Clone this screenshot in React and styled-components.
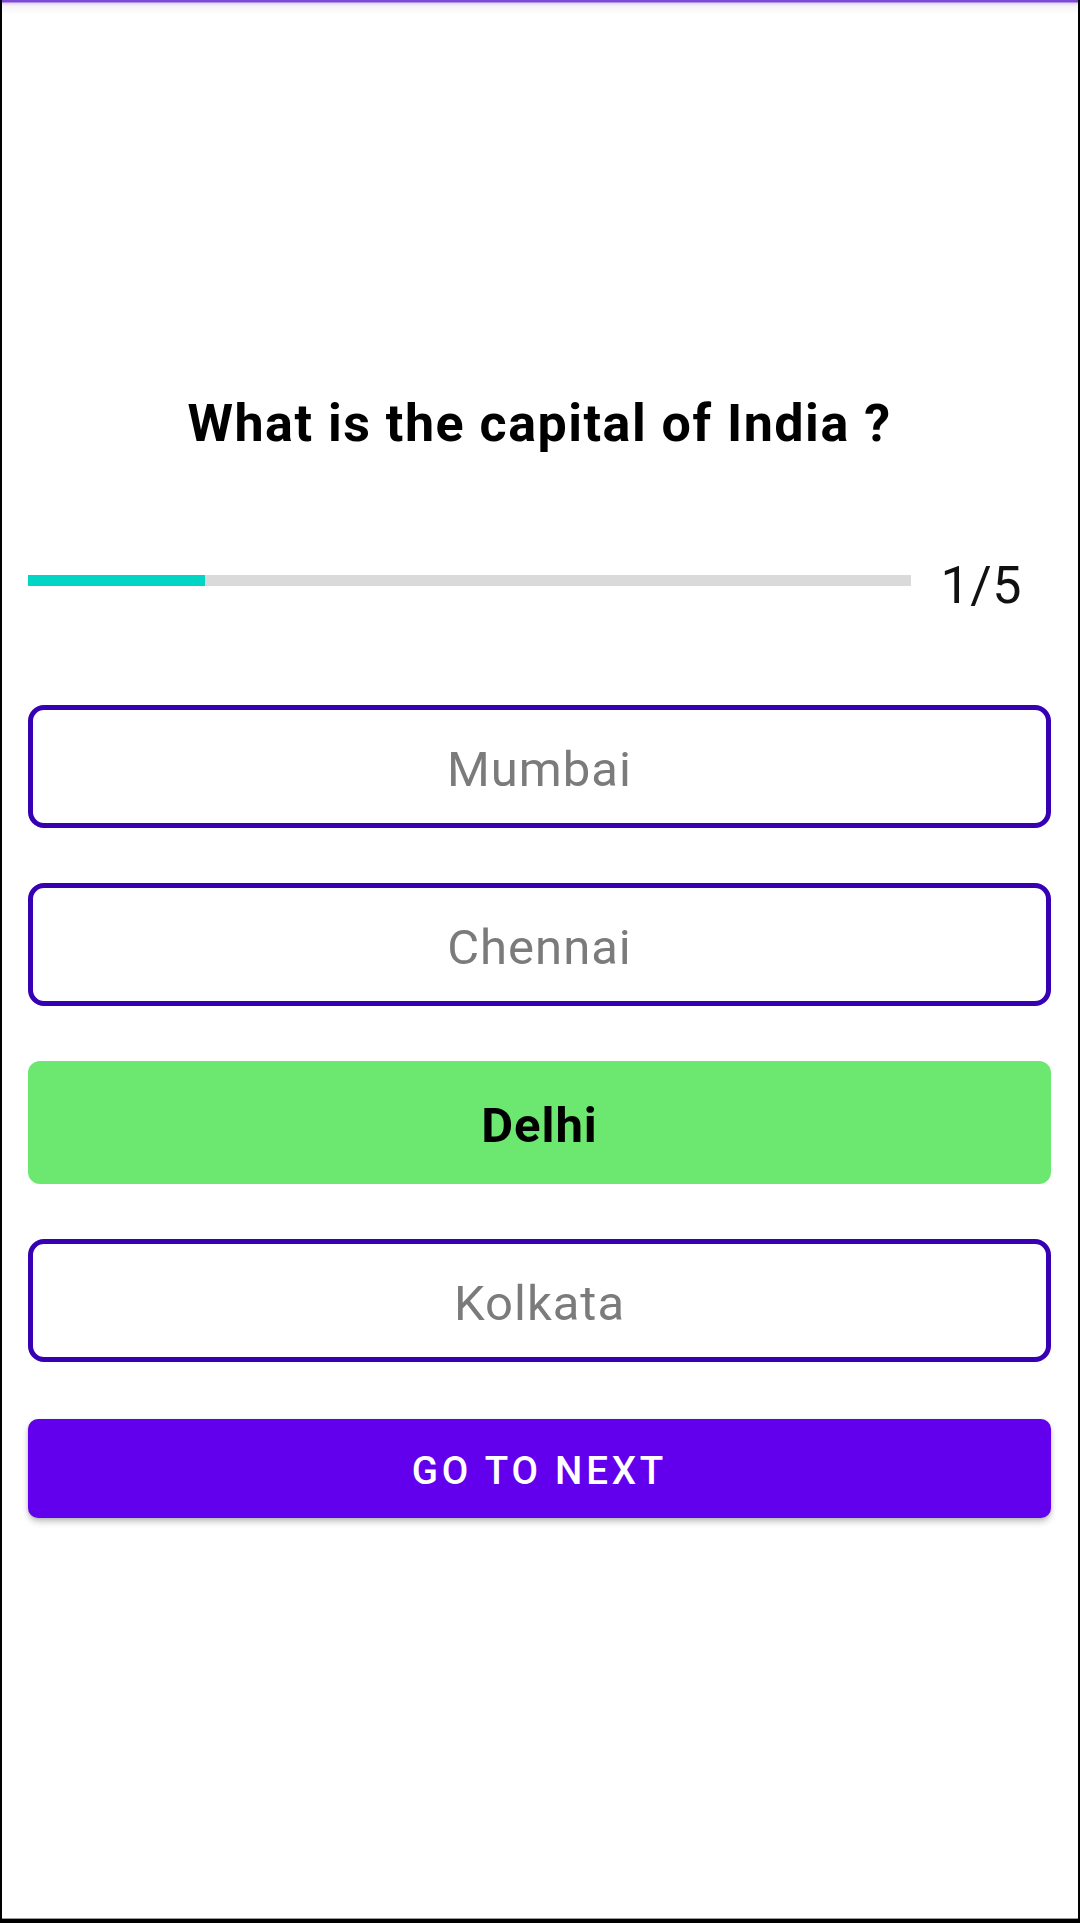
import React from "react";
import styled, { createGlobalStyle } from "styled-components";

const Global = createGlobalStyle`
  html, body { margin: 0; padding: 0; background: #ffffff; }
  * { box-sizing: border-box; }
  body { font-family: Roboto, "Noto Sans", "Liberation Sans", sans-serif; }
`;

const Screen = styled.div`
  width: 1080px;
  height: 1923px;
  background: #ffffff;
  border-left: 2px solid #000;
  border-right: 2px solid #000;
  border-bottom: 4px solid #000;
  display: flex;
  flex-direction: column;
  position: relative;
  overflow: hidden;
`;

const BottomLine = styled.div`
  margin-top: auto;
  height: 1px;
  background: #9a9a9a;
`;

const TopEdge = styled.div`
  height: 14px;
  flex-shrink: 0;
  background: linear-gradient(
    to bottom,
    #7c4bd6 0px,
    #7c4bd6 2px,
    rgba(170, 130, 220, 0.35) 3px,
    rgba(200, 190, 210, 0.18) 6px,
    rgba(255, 255, 255, 0) 14px
  );
`;

const Content = styled.main`
  display: flex;
  flex-direction: column;
  padding: 0 27px 0 26px;
`;

const Question = styled.h1`
  margin: 379px 0 0;
  font-family: Roboto, "Liberation Sans", sans-serif;
  font-weight: 700;
  font-size: 52px;
  letter-spacing: 1.5px;
  line-height: 61px;
  color: #000;
  text-align: center;
`;

const ProgressRow = styled.div`
  margin-top: 101px;
  display: flex;
  align-items: flex-start;
  height: 61px;
`;

const Track = styled.div`
  flex: 1;
  height: 11px;
  margin-top: 20px;
  background: #dadada;
  display: flex;
`;

const Fill = styled.div`
  height: 100%;
  background: #03d5c4;
`;

const Count = styled.span`
  margin: 0 29px 0 30px;
  font-family: Roboto, "Liberation Sans", sans-serif;
  font-weight: 400;
  font-size: 52px;
  letter-spacing: 0.5px;
  line-height: 61px;
  color: #111;
`;

const Options = styled.div`
  margin-top: 89px;
  display: flex;
  flex-direction: column;
  gap: 55px;
`;

const Option = styled.div`
  height: 123px;
  display: flex;
  align-items: center;
  justify-content: center;
  padding-top: 5px;
  border-radius: ${(p) => (p.$correct ? "12px" : "16px")};
  border: ${(p) => (p.$correct ? "none" : "5px solid #3700b3")};
  background: ${(p) => (p.$correct ? "#6ce770" : "#ffffff")};
  color: ${(p) => (p.$correct ? "#000000" : "#7b7b7b")};
  font-family: Roboto, "Liberation Sans", sans-serif;
  font-weight: ${(p) => (p.$correct ? 700 : 400)};
  font-size: 49px;
  letter-spacing: 1px;
  line-height: 1;
`;

const NextButton = styled.button`
  margin-top: 57px;
  height: 99px;
  width: 100%;
  border: none;
  border-radius: 10px;
  background: #6200ee;
  color: #ffffff;
  font-family: Roboto, "Liberation Sans", sans-serif;
  font-weight: 500;
  font-size: 38.5px;
  letter-spacing: 3.8px;
  text-transform: uppercase;
  box-shadow: 0 4px 6px rgba(0, 0, 0, 0.22), 0 1px 3px rgba(0, 0, 0, 0.12);
  display: flex;
  align-items: center;
  justify-content: center;
  padding: 4px 0 0;
`;

const options = [
  { label: "Mumbai" },
  { label: "Chennai" },
  { label: "Delhi", correct: true },
  { label: "Kolkata" },
];

export default function App() {
  const current = 1;
  const total = 5;
  return (
    <>
      <Global />
      <Screen>
        <TopEdge />
        <Content>
          <Question>What is the capital of India ?</Question>
          <ProgressRow>
            <Track>
              <Fill style={{ width: `${(current / total) * 100}%` }} />
            </Track>
            <Count>
              {current}/{total}
            </Count>
          </ProgressRow>
          <Options>
            {options.map((o) => (
              <Option key={o.label} $correct={o.correct}>
                {o.label}
              </Option>
            ))}
          </Options>
          <NextButton>Go to next</NextButton>
        </Content>
        <BottomLine />
      </Screen>
    </>
  );
}
